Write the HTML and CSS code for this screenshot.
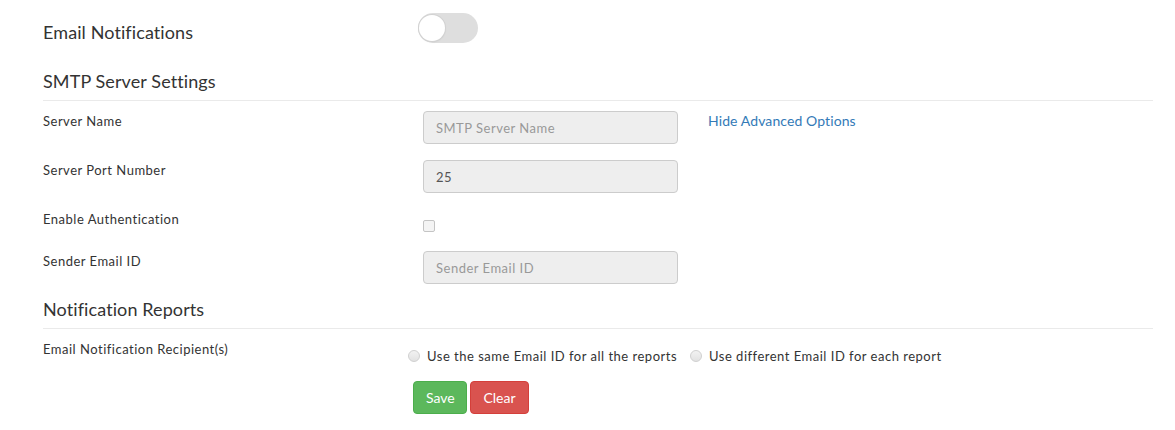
FILE: index.html
```html
<!DOCTYPE html>
<html>
<head>
<meta charset="utf-8">
<link rel="stylesheet" href="styles.css">
</head>
<body>
<div class="page">
  <div class="toggle-row">
    <div class="toggle-label">Email Notifications</div>
    <div class="toggle"><span class="knob"></span></div>
  </div>

  <h3 class="section">SMTP Server Settings</h3>

  <div class="row r1">
    <label class="lbl">Server Name</label>
    <input class="field" type="text" placeholder="SMTP Server Name">
    <a class="adv" href="#">Hide Advanced Options</a>
  </div>
  <div class="row r2">
    <label class="lbl">Server Port Number</label>
    <input class="field" type="text" value="25">
  </div>
  <div class="row r3">
    <label class="lbl">Enable Authentication</label>
    <input class="check" type="checkbox">
  </div>
  <div class="row r4">
    <label class="lbl">Sender Email ID</label>
    <input class="field" type="text" placeholder="Sender Email ID">
  </div>

  <h3 class="section s2">Notification Reports</h3>

  <div class="row r5">
    <label class="lbl lbl-narrow">Email Notification Recipient(s)</label>
    <div class="radios">
      <label class="radio"><input type="radio" name="r"><span>Use the same Email ID for all the reports</span></label>
      <label class="radio"><input type="radio" name="r"><span>Use different Email ID for each report</span></label>
    </div>
  </div>

  <div class="actions">
    <button class="btn save">Save</button>
    <button class="btn clear">Clear</button>
  </div>
</div>
</body>
</html>
```

FILE: styles.css
```css
* { box-sizing: border-box; }
html, body { margin: 0; padding: 0; background: #fff; }
body {
  font-family: Lato, "Open Sans", "Liberation Sans", sans-serif;
  color: #333;
  font-size: 13px;
}
.page {
  padding: 13px 22px 0 43px;
  width: 1175px;
}
.toggle-row {
  display: flex;
  align-items: flex-start;
  height: 30px;
}
.toggle-label {
  width: 375px;
  font-size: 18px;
  line-height: 22px;
  margin-top: 8px;
  letter-spacing: 0.1px;
}
.toggle {
  width: 60px;
  height: 30px;
  border-radius: 15px;
  background: #dedede;
  position: relative;
}
.knob {
  position: absolute;
  left: 1px;
  top: 2px;
  width: 26px;
  height: 26px;
  border-radius: 50%;
  background: #fff;
  box-shadow: 0 0 0 1px #d2d2d2, 0 1px 2px rgba(0,0,0,0.1);
}
.section {
  margin: 27px 0 0 0;
  padding: 0 0 8px 0;
  font-size: 18px;
  line-height: 22px;
  font-weight: 400;
  letter-spacing: 0.1px;
  border-bottom: 1px solid #eaeaea;
}
.section.s2 { margin-top: 14px; }
.row {
  display: flex;
  align-items: flex-start;
  margin-top: 16px;
}
.row.r1 { margin-top: 10px; }
.row.r3 { height: 26px; }
.row.r5 { margin-top: 10px; }
.lbl {
  width: 380px;
  flex: none;
  padding-top: 1px;
  line-height: 18px;
  font-size: 13px;
  letter-spacing: 0.5px;
}
.lbl-narrow { width: 365px; }
.field {
  width: 255px;
  height: 33px;
  background: #eee;
  border: 1px solid #ccc;
  border-radius: 4px;
  padding: 6px 12px;
  font-family: inherit;
  font-size: 13px;
  letter-spacing: 0.5px;
  color: #555;
  outline: none;
}
.field::placeholder { color: #999; }
.adv {
  margin-left: 30px;
  padding-top: 1px;
  line-height: 18px;
  font-size: 14px;
  letter-spacing: 0.1px;
  color: #337ab7;
  text-decoration: none;
}
.check {
  appearance: none;
  -webkit-appearance: none;
  margin: 11px 0 0 0;
  width: 12px;
  height: 12px;
  border: 1px solid #c4c4c4;
  border-radius: 2px;
  background: #f4f4f4;
}
.radios {
  display: flex;
  margin-top: 8px;
  gap: 13px;
}
.radio {
  display: flex;
  align-items: center;
  line-height: 18px;
  font-size: 13px;
  letter-spacing: 0.5px;
}
.radio input {
  appearance: none;
  -webkit-appearance: none;
  margin: 0 7px 0 0;
  width: 12px;
  height: 12px;
  border: 1px solid #d0d0d0;
  border-radius: 50%;
  background: linear-gradient(#f2f2f2, #e2e2e2);
}
.actions {
  display: flex;
  gap: 3px;
  margin: 16px 0 0 370px;
}
.btn {
  height: 33px;
  border-radius: 4px;
  font-family: inherit;
  font-size: 14px;
  color: #fff;
  padding: 0 12px;
  border: 1px solid;
}
.save { width: 54px; background: #5cb85c; border-color: #4cae4c; }
.clear { width: 59px; background: #d9534f; border-color: #d43f3a; }
```
